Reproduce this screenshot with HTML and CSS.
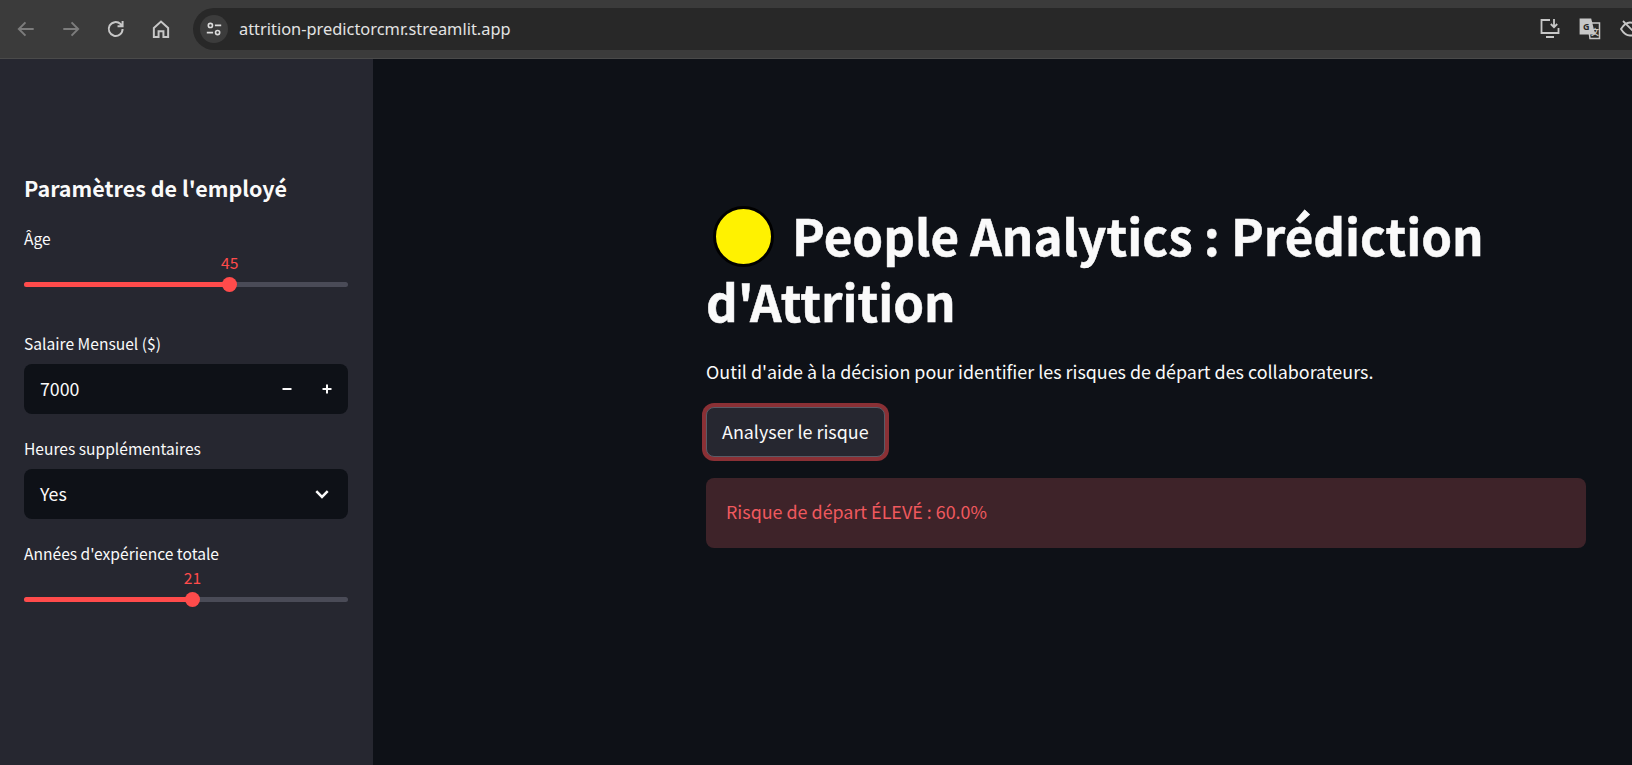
FILE: index.html
```html
<!DOCTYPE html>
<html lang="fr">
<head>
<meta charset="utf-8">
<title>People Analytics</title>
<link rel="stylesheet" href="styles.css">
</head>
<body>
<header class="toolbar">
  <nav class="nav-icons">
    <svg class="ico dim" viewBox="0 0 20 20"><path d="M17 10H4M9.5 4L3.5 10l6 6"/></svg>
    <svg class="ico dim" viewBox="0 0 20 20"><path d="M3 10h13M10.5 4l6 6-6 6"/></svg>
    <svg class="ico" viewBox="0 0 20 20"><path d="M16 10a6.3 6.3 0 1 1-1.9-4.5L16 7.2M16 2.8v4.6h-4.6"/></svg>
    <svg class="ico" viewBox="0 0 20 20"><path d="M3.5 9L10 3.2 16.500 9v8.300h-4.300v-5.300H7.800v5.300H3.500z"/></svg>
  </nav>
  <div class="omnibox">
    <span class="site-chip">
      <svg class="tune" viewBox="0 0 20 20"><circle cx="6" cy="6" r="2.300"/><path d="M11 6h7M2 14h7"/><circle cx="14" cy="14" r="2.300"/></svg>
    </span>
    <span class="url">attrition-predictorcmr.streamlit.app</span>
    <span class="omni-actions">
      <svg class="ico act" viewBox="0 0 22 22"><path d="M11 2H2.500v13h17V10M7 19h8"/><path d="M15 1v8M11.800 6l3.200 3.200L18.200 6"/></svg>
      <svg class="ico act translate" viewBox="0 0 22 22"><path class="sheet-b" d="M9 5h11.500v15.500H11z"/><path class="sheet-a" d="M1.500 1.500h10l3.500 14H1.500z"/><text class="g" x="4" y="12">G</text><text class="x" x="12" y="17">文</text></svg>
      <svg class="ico act" viewBox="0 0 22 22"><path d="M2 11c3-5 6-6.500 9-6.500S17 6 20 11c-3 5-6 6.500-9 6.500S5 16 2 11zM4 3l15 15"/></svg>
    </span>
  </div>
</header>
<div class="app">
  <aside class="sidebar">
    <h2 class="side-title">Paramètres de l'employé</h2>
    <div class="field field-age">
      <label class="label">Âge</label>
      <div class="slider">
        <span class="slider-fill" style="width:63.5%"><span class="slider-value">45</span><span class="thumb"></span></span>
      </div>
    </div>
    <div class="field field-salary">
      <label class="label">Salaire Mensuel ($)</label>
      <div class="box">
        <span>7000</span>
        <span class="steppers">
          <svg class="step" viewBox="0 0 12 12"><path d="M1.500 6h9"/></svg>
          <svg class="step" viewBox="0 0 12 12"><path d="M1.500 6h9M6 1.500v9"/></svg>
        </span>
      </div>
    </div>
    <div class="field field-hours">
      <label class="label">Heures supplémentaires</label>
      <div class="box">
        <span>Yes</span>
        <svg class="chev" viewBox="0 0 14 14"><path d="M2 4.500l5 5 5-5"/></svg>
      </div>
    </div>
    <div class="field field-exp">
      <label class="label">Années d'expérience totale</label>
      <div class="slider">
        <span class="slider-fill" style="width:52%"><span class="slider-value">21</span><span class="thumb"></span></span>
      </div>
    </div>
  </aside>
  <main class="main">
    <h1 class="title"><span class="emoji"></span>People Analytics : Prédiction d'Attrition</h1>
    <p class="lead">Outil d'aide à la décision pour identifier les risques de départ des collaborateurs.</p>
    <button class="btn" type="button">Analyser le risque</button>
    <div class="alert">Risque de départ ÉLEVÉ : 60.0%</div>
  </main>
</div>
</body>
</html>
```
FILE: styles.css
```css
* { box-sizing: border-box; }
html, body { margin: 0; height: 100%; overflow: hidden; }
body {
  display: flex;
  flex-direction: column;
  background: #0e1117;
  color: #fafafa;
  font-family: "Noto Sans CJK JP", "Noto Sans", sans-serif;
}

/* browser chrome */
.toolbar {
  height: 59px;
  flex: none;
  display: flex;
  align-items: center;
  padding: 8px 0 8px 15px;
  background: #3b3b3b;
  border-bottom: 1px solid #4a4a4a;
}
.nav-icons { display: flex; gap: 23px; width: 178px; flex: none; }
.ico { width: 22px; height: 22px; fill: none; stroke: #c7c7c7; stroke-width: 1.800; }
.ico.dim { stroke: #7c7c7c; }
.omnibox {
  flex: 1;
  height: 42px;
  display: flex;
  align-items: center;
  padding-left: 7px;
  background: #282828;
  border-radius: 21px 0 0 21px;
}
.site-chip {
  width: 28px;
  height: 28px;
  border-radius: 50%;
  background: #3c3c3c;
  display: flex;
  align-items: center;
  justify-content: center;
}
.tune { width: 18px; height: 18px; fill: none; stroke: #dcdcdc; stroke-width: 1.800; }
.url {
  margin-left: 11px;
  font-family: "Noto Sans", sans-serif;
  font-size: 16.400px;
  line-height: 20px;
  color: #e3e3e3;
}
.omni-actions { margin-left: auto; display: flex; gap: 18px; margin-right: -9px; align-items: center; }
.act { flex: none; }
.translate .sheet-a { fill: #c7c7c7; stroke: #c7c7c7; }
.translate .sheet-b { stroke-width: 1.500; }
.translate text { stroke: none; font-family: "Noto Sans", "Noto Sans CJK SC", sans-serif; font-weight: 700; }
.translate .g { fill: #282828; font-size: 9px; }
.translate .x { fill: #c7c7c7; font-family: "Noto Sans CJK SC", sans-serif; font-size: 8px; }

/* app */
.app { flex: 1; display: flex; min-height: 0; }
.sidebar {
  width: 373px;
  flex: none;
  padding: 113px 25px 0 24px;
  background: #262730;
}
.side-title {
  margin: 0;
  font-size: 21.500px;
  line-height: 32px;
  font-weight: 600;
}
.label { display: block; font-size: 15.600px; line-height: 20px; color: #fafafa; }
.field-age { margin-top: 24px; }
.field-salary { margin-top: 46px; }
.field-hours { margin-top: 24px; }
.field-exp { margin-top: 24px; }

.slider {
  position: relative;
  height: 5px;
  margin-top: 34px;
  border-radius: 3px;
  background: #4a4b57;
}
.slider-fill {
  position: absolute;
  left: 0;
  top: 0;
  height: 5px;
  border-radius: 3px;
  background: #ff4b4b;
}
.thumb {
  position: absolute;
  right: -7.500px;
  top: -5px;
  width: 15px;
  height: 15px;
  border-radius: 50%;
  background: #ff4b4b;
}
.slider-value {
  position: absolute;
  right: -20px;
  width: 40px;
  top: -30px;
  text-align: center;
  font-size: 15.600px;
  line-height: 20px;
  color: #ff4b4b;
}
.box {
  margin-top: 11px;
  height: 50px;
  display: flex;
  align-items: center;
  justify-content: space-between;
  padding: 0 15px 0 16px;
  background: #0e1117;
  border-radius: 8px;
  font-size: 17.800px;
  line-height: 24px;
}
.box > span:first-child { padding-bottom: 3px; }
.steppers { display: flex; gap: 28px; align-items: center; padding-right: 0; }
.step { width: 12px; height: 12px; fill: none; stroke: #fafafa; stroke-width: 2; }
.chev { width: 16px; height: 16px; fill: none; stroke: #fafafa; stroke-width: 2.200; margin-right: 3px; }

/* main */
.main {
  flex: 1;
  min-width: 0;
  padding: 143px 46px 0 333px;
}
.title {
  margin: 0;
  font-size: 49.300px;
  line-height: 66px;
  font-weight: 700;
  -webkit-text-stroke: 0.5px #fafafa;
}
.emoji {
  display: inline-block;
  width: 61px;
  height: 61px;
  margin: -12px 18px -11px 7px;
  vertical-align: 0;
  border-radius: 50%;
  background: #fff200;
  border: 3.500px solid #000;
}
.lead {
  margin: 24px 0 0;
  font-size: 17.900px;
  line-height: 26px;
}
.btn {
  display: block;
  margin: 23px 0 0;
  height: 50px;
  padding: 0 15px 3px;
  font: inherit;
  font-size: 17.900px;
  line-height: 24px;
  color: #fafafa;
  background: #262730;
  border: 1px solid #5a5b66;
  border-radius: 8px;
  box-shadow: 0 0 0 4px #8a3035;
}
.alert {
  margin-top: 21px;
  height: 70px;
  padding: 0 20px 4px;
  display: flex;
  align-items: center;
  font-size: 17.900px;
  line-height: 24px;
  color: #f0595e;
  background: #3e2329;
  border-radius: 8px;
}
```
